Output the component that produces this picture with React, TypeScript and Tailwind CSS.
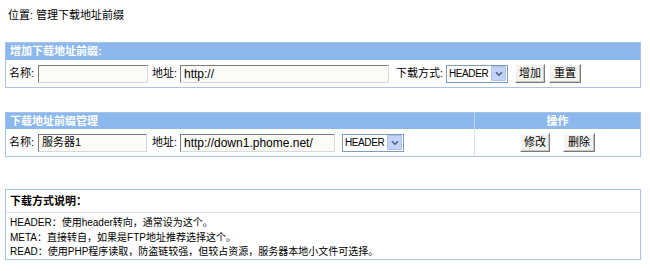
import React from 'react';

const font = { fontFamily: '"Liberation Sans", "Noto Sans CJK SC", sans-serif' };

function Btn({ label, w }: { label: string; w: string }) {
  return (
    <button
      className={`${w} h-[19px] shrink-0 flex items-center justify-center bg-[#f3f3ef] border border-t-[#ffffff] border-l-[#ffffff] border-r-[#7a7a7a] border-b-[#7a7a7a] shadow-[inset_-1px_-1px_0_#c8c8c4] text-[11px] leading-none text-black`}
    >
      {label}
    </button>
  );
}

function Select() {
  return (
    <div className="w-[62px] h-[18px] shrink-0 flex items-center justify-between border border-[#7f9db9] bg-white">
      <span className="pl-[2px] text-[10px] tracking-[-0.4px] leading-none whitespace-nowrap">HEADER</span>
      <span className="w-[15px] h-[15px] shrink-0 mr-[1px] bg-[#c3d3f8] border border-[#aac0ee] rounded-[1px] flex items-center justify-center">
        <svg width="8" height="6" viewBox="0 0 8 6">
          <path d="M1 1.2 L4 4.2 L7 1.2" stroke="#4d6185" strokeWidth="1.6" fill="none" />
        </svg>
      </span>
    </div>
  );
}

function Input({ w, value, cjk }: { w: string; value?: string; cjk?: boolean }) {
  return (
    <span
      className={`${w} h-[18px] shrink-0 flex items-center border border-t-[#7c7c7c] border-l-[#7c7c7c] border-r-[#d8d8d8] border-b-[#d8d8d8] bg-[#fbfbf8] px-[3px] ${cjk ? 'text-[11px]' : 'text-[12px]'} leading-none text-black whitespace-nowrap`}
    >
      {value}
    </span>
  );
}

function Label({ text, cls }: { text: string; cls: string }) {
  return <span className={`${cls} shrink-0 whitespace-nowrap`}>{text}</span>;
}

export default function App() {
  return (
    <div className="w-[650px] h-[271px] bg-white text-[11px] text-black" style={font}>
      <div className="pl-[8px] pt-[9px] h-[42px] leading-[13px]">位置: 管理下载地址前缀</div>

      {/* 增加下载地址前缀 */}
      <div className="ml-[5px] w-[636px] border border-[#a6c4ea]">
        <div className="h-[17px] bg-[#8cb8ee] pl-[4px] flex items-center text-white font-bold">增加下载地址前缀:</div>
        <div className="h-[27px] pl-[3px] flex items-center">
          <Label text="名称:" cls="w-[29px]" />
          <Input w="w-[110px]" />
          <Label text="地址:" cls="ml-[4px] w-[28px]" />
          <Input w="w-[209px]" value="http://" />
          <Label text="下载方式:" cls="ml-[7px] w-[50px]" />
          <Select />
          <span className="ml-[7px] shrink-0"><Btn label="增加" w="w-[30px]" /></span>
          <span className="ml-[4px] shrink-0"><Btn label="重置" w="w-[32px]" /></span>
        </div>
      </div>

      {/* 下载地址前缀管理 */}
      <div className="ml-[5px] mt-[24px] w-[636px] border border-[#a6c4ea]">
        <div className="h-[16px] bg-[#8cb8ee] flex text-white font-bold">
          <div className="flex-1 pl-[4px] flex items-center border-r border-[#c3d7f2]">下载地址前缀管理</div>
          <div className="w-[165px] flex items-center justify-center">操作</div>
        </div>
        <div className="h-[27px] flex">
          <div className="flex-1 pl-[3px] flex items-center border-r border-[#d3e1f3]">
            <Label text="名称:" cls="w-[29px]" />
            <Input w="w-[109px]" value="服务器1" cjk />
            <Label text="地址:" cls="ml-[5px] w-[28px]" />
            <Input w="w-[155px]" value="http://down1.phome.net/" />
            <span className="ml-[7px] shrink-0"><Select /></span>
          </div>
          <div className="w-[165px] flex items-center justify-center gap-[13px]">
            <Btn label="修改" w="w-[30px]" />
            <Btn label="删除" w="w-[32px]" />
          </div>
        </div>
      </div>

      {/* 下载方式说明 */}
      <div className="ml-[5px] mt-[32px] w-[636px] border border-[#a6c4ea]">
        <div className="h-[23px] pl-[4px] flex items-center font-bold border-b border-[#dde7f3]">下载方式说明：</div>
        <div className="h-[46px] pl-[4px] pt-[3px] text-[10px] leading-[14.5px]">
          <div>HEADER：使用header转向，通常设为这个。</div>
          <div>META：直接转自，如果是FTP地址推荐选择这个。</div>
          <div>READ：使用PHP程序读取，防盗链较强，但较占资源，服务器本地小文件可选择。</div>
        </div>
      </div>
    </div>
  );
}
